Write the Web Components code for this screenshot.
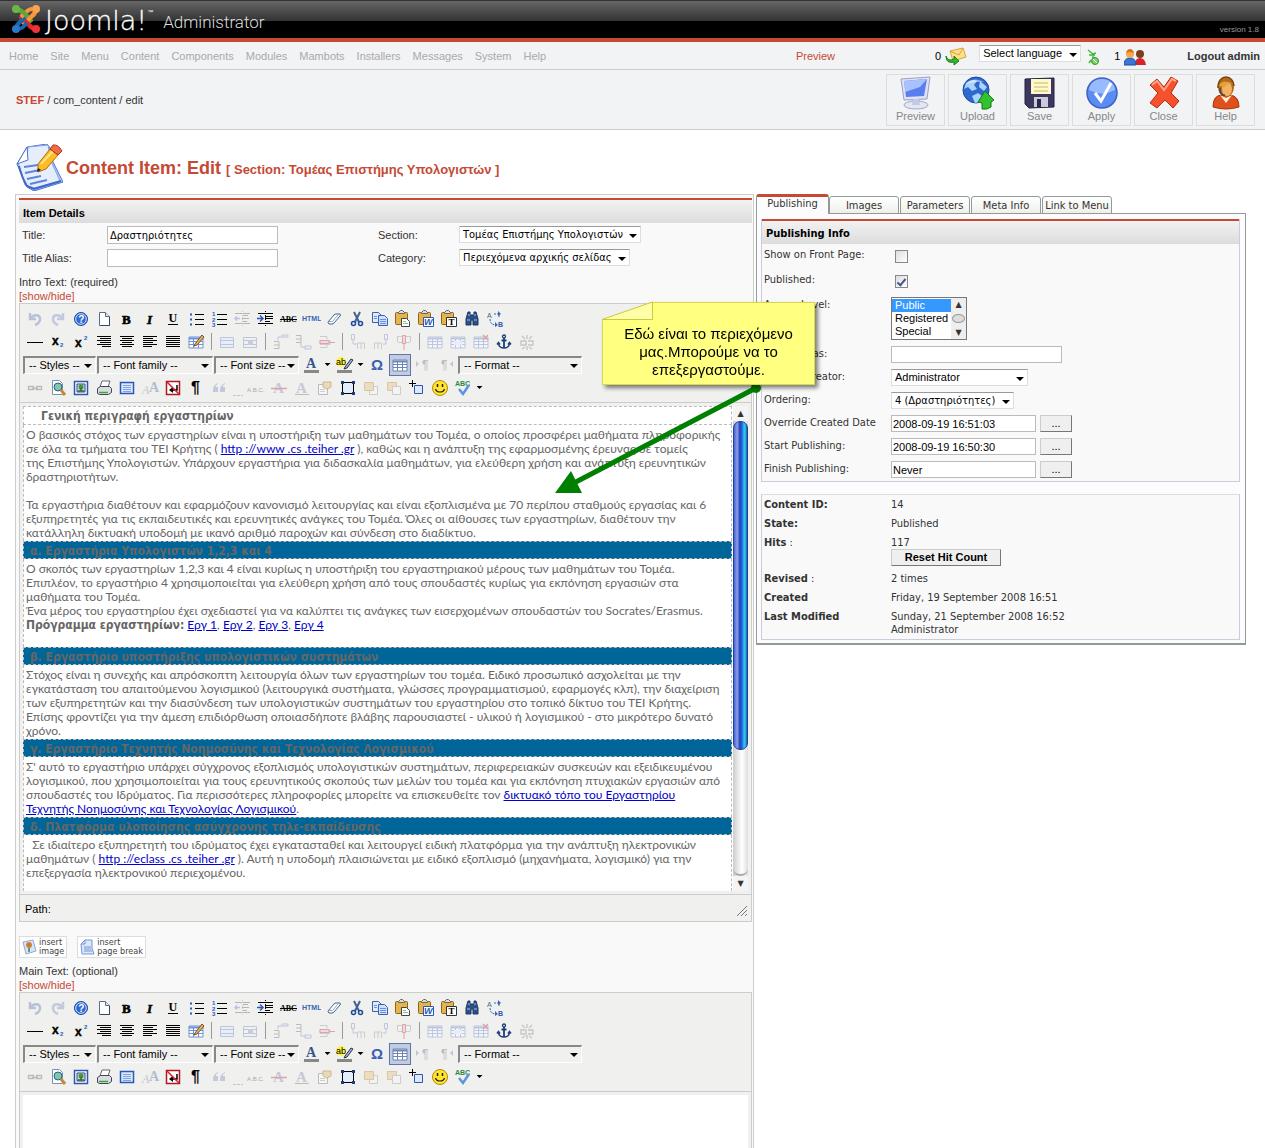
<!DOCTYPE html>
<html lang="el">
<head>
<meta charset="utf-8">
<title>STEF - Administration</title>
<style>
  html { height: 100%; }
  body {
    --accent: #c64934;
    --bar: #f1f3f5;
    --line: #ccc;
    --sans: "Liberation Sans", Arial, sans-serif;
    --ui: "DejaVu Sans Condensed", "Noto Sans", sans-serif;
    --text: Lato, "Liberation Sans", sans-serif;
    margin: 0;
    min-height: 100%;
    display: flex;
    flex-direction: column;
    font: 11px/14px var(--sans);
    color: #333;
    background: #fff;
  }
</style>
</head>
<body>
<admin-header version="version 1.8">Administrator</admin-header>
<admin-menu></admin-menu>
<admin-toolbar site="STEF" path=" / com_content / edit"></admin-toolbar>
<page-title section="[ Section: Τομέας Επιστήμης Υπολογιστών ]">Content Item: Edit</page-title>
<edit-layout>
  <item-details slot="main"></item-details>
  <tab-pane slot="side">
    <publishing-info></publishing-info>
  </tab-pane>
  <sticky-note slot="note">Εδώ είναι το περιεχόμενο<br>μας.Μπορούμε να το<br>επεξεργαστούμε.</sticky-note>
</edit-layout>

<script>
// small editor icons, drawn on a 20x20 grid
const page = (x, y, fill) =>
  `<path d="M${x} ${y}h6l3 3v7h-9z" fill="${fill}" stroke="#3a62a8"/>`;
const lines = (list, color = "#000") =>
  `<path d="${list.map(([x, y, w]) => `M${x} ${y}h${w}`).join("")}" stroke="${color}" stroke-width="1"/>`;
const grid = (color, fill = "#fff") =>
  `<path d="M3 5h14v11H3z" fill="${fill}" stroke="${color}"/><path d="M3 6.500h14" stroke="${color}" stroke-width="2"/><path d="M7.500 6v10M12.500 6v10M3 9.500h14M3 12.500h14" stroke="${color}"/>`;
const clipboard =
  `<rect x="2.500" y="3.500" width="12" height="12" rx="1" fill="#e5b54c" stroke="#8a651c"/><path d="M5.500 4.500v-1l2-2h2l2 2v1z" fill="#ddd" stroke="#666"/>`;
const glyph = (text, x, y, size, color, extra = "") =>
  `<text x="${x}" y="${y}" font-size="${size}" fill="${color}" ${extra}>${text}</text>`;

const ICONS = {
  undo: `<path d="M5 4v6h6M5.500 9.500C8 5 15 5 15 10c0 3-2 5-5 6" stroke="#b9c1da" stroke-width="2.500"/>`,
  redo: `<path d="M15 4v6H9M14.500 9.500C12 5 5 5 5 10c0 3 2 5 5 6" stroke="#c3c9dc" stroke-width="2.500"/>`,
  help: `<circle cx="10" cy="10" r="6.500" fill="#2f69d0" stroke="#1c4aa5"/><circle cx="10" cy="10" r="5.300" stroke="#cfe0ff"/>${glyph("?", 7.3, 13.5, 10, "#fff", 'font-weight="bold"')}`,
  newdoc: `<path d="M5.500 3.500h6l4 4v9h-10z" fill="#fff" stroke="#5a6c8d"/><path d="M11.500 3.500v4h4" stroke="#5a6c8d" fill="#dce6f7"/><path d="M15.500 8v8.500h-9" stroke="#30466b"/>`,
  bold: glyph("B", 5, 14.5, 13, "#000", 'font-family="Liberation Serif" font-weight="bold" stroke="#000" stroke-width=".6"'),
  italic: glyph("I", 7, 14.5, 13, "#000", 'font-family="Liberation Serif" font-weight="bold" font-style="italic" stroke="#000" stroke-width=".5"'),
  underline: `${glyph("U", 5.5, 13, 12, "#000", 'font-family="Liberation Serif" font-weight="bold"')}<path d="M5 15.500h10" stroke="#000"/>`,
  bullist: `<path d="M4 5.500h2M4 10.500h2M4 15.500h2" stroke="#2a58b5" stroke-width="2"/>${lines([[9, 5.5, 9], [9, 10.5, 9], [9, 15.5, 9]])}`,
  numlist: `${glyph("1", 3, 7, 6, "#2a58b5", 'font-weight="bold"')}${glyph("2", 3, 12.5, 6, "#2a58b5", 'font-weight="bold"')}${glyph("3", 3, 18, 6, "#2a58b5", 'font-weight="bold"')}${lines([[8, 5.5, 10], [8, 10.5, 10], [8, 15.5, 10]])}`,
  outdent: `${lines([[3, 4.5, 15], [10, 6.5, 6], [10, 9.5, 7], [10, 12.5, 5], [3, 14.5, 15]], "#b5b5b5")}<path d="M8 9.500H3m2-2l-2 2 2 2" stroke="#b9c4e2" stroke-width="1.500"/><path d="M10.500 2v16" stroke="#ccc" stroke-dasharray="1 1"/>`,
  indent: `${lines([[3, 4.5, 15], [10, 7.5, 8], [10, 9.5, 8], [10, 12.500, 5], [3, 14.5, 15]])}<path d="M2 9.500h6m-3-3l3 3-3 3" stroke="#2a58b5" stroke-width="1.500"/><path d="M10.500 2v16" stroke="#000" stroke-dasharray="1 1"/>`,
  strike: `${glyph("ABC", 2, 13, 8, "#000", 'font-weight="bold" font-family="Liberation Serif"')}<path d="M2 10.500h17" stroke="#000"/>`,
  html: glyph("HTML", 1, 12, 7, "#3566b8", 'font-weight="bold"'),
  eraser: `<path d="M4 13l6-7q1-1 2-1h4q1 1 0 2l-6 7q-1 1-2 1H5q-1-1-1-2z" fill="#fff" stroke="#44618f"/><path d="M4.500 12.500h4l6-7" stroke="#8aa3cc"/>`,
  cut: `<path d="M7 3l5 10M13 3L8 13" stroke="#44618f" stroke-width="2"/><circle cx="6.500" cy="14.500" r="2" stroke="#1d4aa0" stroke-width="1.500"/><circle cx="13.500" cy="14.500" r="2" stroke="#1d4aa0" stroke-width="1.500"/>`,
  copy: `${page(2.5, 3.5, "#dfeaff")}${page(8.500, 6.5, "#cfe0ff")}<path d="M10 10.500h6M10 12.500h6M10 14.500h6M4 7.500h3M4 9.500h3" stroke="#6a92dc"/>`,
  paste: `${clipboard}<path d="M8.500 9.500h5l3 3v5h-8z" fill="#fff" stroke="#444"/><path d="M10 12.500h3M10 14.500h5" stroke="#8ba"/>`,
  pasteword: `${clipboard}<path d="M7.500 8.500h10v9h-10z" fill="#fff" stroke="#2a58b5"/>${glyph("W", 8, 16, 9, "#2a58b5", 'font-weight="bold" font-style="italic"')}`,
  pastetext: `${clipboard}<path d="M7.500 8.500h10v9h-10z" fill="#fff" stroke="#333"/>${glyph("T", 9.5, 16, 9, "#000", 'font-weight="bold" font-family="Liberation Serif"')}`,
  search: `<path d="M6 3h2v3h4V3h2l2 7v6h-5v-5H9v5H4v-6z" fill="#2c4f86" stroke="#1c3868"/><path d="M5 11h3M12 11h3M6 6h2M12 6h2" stroke="#a9c4ef"/>`,
  replace: `${glyph("A", 2, 9, 7, "#44618f")}${glyph("B", 13, 18, 7, "#2a58b5", 'font-weight="bold"')}<path d="M5 10c0 4 2 6 6 6M9 5h5v3" stroke="#3566b8" stroke-dasharray="2 1"/><path d="M13 2l3 3-3 2M10 13l3 3-3 2z" fill="#3566b8"/>`,
  hr: `<path d="M2 10.500h16" stroke="#000"/>`,
  sub: `${glyph("x", 4, 12.5, 12, "#000", 'font-weight="bold" stroke="#000" stroke-width=".4"')}${glyph("2", 12, 15, 6, "#2a58b5", 'font-weight="bold"')}`,
  sup: `${glyph("x", 4, 14.5, 12, "#000", 'font-weight="bold" stroke="#000" stroke-width=".4"')}${glyph("2", 13, 8, 6, "#2a58b5", 'font-weight="bold"')}`,
  right: lines([[3, 4.5, 14], [6, 6.5, 11], [3, 8.5, 14], [6, 10.5, 11], [3, 12.5, 14], [8, 14.5, 9]]),
  center: lines([[3, 4.5, 14], [5, 6.5, 10], [3, 8.5, 14], [5, 10.5, 10], [3, 12.5, 14], [5, 14.5, 10]]),
  left: lines([[3, 4.5, 14], [3, 6.5, 10], [3, 8.5, 14], [3, 10.5, 10], [3, 12.5, 14], [3, 14.5, 9]]),
  full: lines([[3, 4.5, 14], [3, 6.5, 14], [3, 8.5, 14], [3, 10.5, 14], [3, 12.5, 14], [3, 14.5, 14]]),
  table: `${grid("#6d93d6")}<path d="M9 12l7-9 2 2-7 8-3 1z" fill="#e3b467" stroke="#7a5320"/>`,
  rowprops: `<path d="M3.500 5.500h13v10h-13zM3.500 8.500h13v4h-13z" fill="#e9edf5" stroke="#bcc6dc"/>`,
  cellprops: `<path d="M3.500 5.500h13v10h-13zM3.500 8.500h13M3.500 12.500h13M8.500 8v5M11.500 8v5" stroke="#bcc6dc"/><path d="M8 8h5v5H8z" fill="#c6cddd"/>`,
  rowbefore: `<path d="M3 9.500h5v7H3m0-3.500h5" stroke="#bbb"/><path d="M7 8V5h4m0 0h6v-2h-6z" stroke="#bcc6dc"/>`,
  rowafter: `<path d="M2 3.500h5v7H2m0-3.500h5" stroke="#bbb"/><path d="M7 11v4h4m0-1h6v3h-6z" stroke="#bcc6dc"/>`,
  rowdelete: `<path d="M3 4.500h7v3M3 15.500h7v-3M3 8.500h10v4H3z" stroke="#ccc"/><path d="M3 8.500h9v3H3z" stroke="#dfa3ab" fill="#f1d8dc"/><path d="M12 10.500h6" stroke="#dfa3ab"/>`,
  colbefore: `<path d="M3.500 2.500h3v5h-3zM5 8v4h4" stroke="#bcc6dc"/><path d="M9.500 17v-6h7v6M13 11v6" stroke="#ccc"/>`,
  colafter: `<path d="M13.500 2.500h3v5h-3zM15 8v4h-3" stroke="#bcc6dc"/><path d="M3.500 17v-6h7v6M7 11v6" stroke="#ccc"/>`,
  coldelete: `<path d="M3.500 4v6M16.500 4v6M3.500 4.500h4M12 4.500h4M4 10.500h12" stroke="#ccc"/><path d="M8.500 3.500h3v8h-3zM10 12v6" stroke="#dfa3ab" fill="#f1d8dc"/>`,
  split: grid("#bcc6dc", "#f3f5fa"),
  merge: `${grid("#bcc6dc", "#f3f5fa")}<path d="M6 9h8v4H6z" fill="#e6eefc"/>`,
  tabledelete: `${grid("#bcc6dc", "#f3f5fa")}<path d="M12 3l5 5M17 3l-5 5" stroke="#dfa3ab" stroke-width="1.500"/>`,
  anchor: `<circle cx="10" cy="4.500" r="1.500" stroke="#1f3f7a" stroke-width="1.300"/><path d="M10 6v10M7.500 8.500h5" stroke="#1f3f7a" stroke-width="1.800"/><path d="M4.500 11c0 3.500 3 5 5.500 5s5.500-1.500 5.500-5M3 12.500l1.500-2 1.500 2M14 12.500l1.500-2 1.500 2" stroke="#1f3f7a" stroke-width="1.500"/>`,
  unlink: `<path d="M4 9h5v4H4zM11 9h5v4h-5M10 3v4M5 4l3 3M15 4l-3 3M10 14v4M5 17l3-2M15 17l-3-2" stroke="#c5c5c5" stroke-width="1.300"/>`,
  forecolor: `${glyph("A", 5, 13, 14, "#34558f", 'font-weight="bold" font-family="Liberation Serif"')}<path d="M3 15h15v3H3z" fill="#888"/>`,
  backcolor: `<circle cx="7" cy="7" r="5" fill="#fff44a"/>${glyph("ab", 2, 10, 9, "#000")}<path d="M11 12l6-8 2 1-6 8-3 1z" fill="#9bb6e4" stroke="#333"/><path d="M3 15h15v3H3z" fill="#888"/>`,
  omega: glyph("Ω", 4, 15, 15, "#3a62b4", 'font-weight="bold"'),
  visualaid: grid("#6d87b6"),
  ltr: `<path d="M3 6l3 3-3 3z" fill="#bcc6dc"/>${glyph("¶", 9, 14, 12, "#bbb")}`,
  rtl: `<path d="M17 6l-3 3 3 3z" fill="#bcc6dc"/>${glyph("¶", 5, 14, 12, "#bbb")}`,
  link: `<path d="M3.500 8.500h5v3h-5zM11.500 8.500h5v3h-5zM7 10.500h6" stroke="#bbb" stroke-width="1.300"/>`,
  preview: `<path d="M4.500 2.500h7l3 3v11h-10z" fill="#fff" stroke="#7a92b8"/><circle cx="10" cy="9" r="4" fill="#7fc7a7" stroke="#2c5f8f"/><path d="M13 12l4 5" stroke="#c48a3a" stroke-width="3"/>`,
  image: `<path d="M3.500 3.500h13v13h-13z" fill="#fff" stroke="#2a58b5" stroke-width="1.500"/><path d="M6 6h8v8H6z" fill="#b9d9f6" stroke="#446"/><circle cx="10" cy="9" r="2.500" fill="#3b9a3b"/><path d="M10 10v3M7 13h6" stroke="#3a6a2a" stroke-width="1.500"/>`,
  print: `<path d="M8 3h8l-2 6H6z" fill="#fff" stroke="#667"/><path d="M3.500 10.500l3-2h9l2 2v4l-3 2h-9l-2-1z" fill="#d8dde4" stroke="#445"/><path d="M5 14.500h9" stroke="#3da43d" stroke-width="1.500"/>`,
  fullscreen: `<path d="M3.500 4.500h13v11h-13z" fill="#dbe8ff" stroke="#2a58b5" stroke-width="1.500"/><path d="M6 7.500h8M6 9.500h8M6 11.500h8M6 13.500h8" stroke="#7fa2e4"/>`,
  styleprops: `${glyph("A", 2, 16, 12, "#c3c9d6", 'font-style="italic" font-family="Liberation Serif"')}${glyph("A", 9, 14, 14, "#b4bccd", 'font-weight="bold" font-family="Liberation Serif"')}`,
  nonbreaking: `<path d="M3.500 3.500h13v13h-13z" fill="#fff" stroke="#b01822" stroke-width="1.500"/><path d="M14 7v5H9" stroke="#000" stroke-width="1.500"/><path d="M6 12l4-3v6z" fill="#000"/><path d="M4 4l12 12" stroke="#d5202c" stroke-width="1.500"/>`,
  pilcrow: glyph("¶", 5, 15, 16, "#000", 'font-weight="bold"'),
  cite: `<path d="M9 5q-5 2-5 7v2h5v-5H6.500q0-2 2.500-3zM16 5q-5 2-5 7v2h5v-5h-2.500q0-2 2.500-3z" fill="#c3c9dc"/>`,
  acronym: `<path d="M2 17.500h10" stroke="#c5c5c5" stroke-dasharray="3 1"/>`,
  abbr: glyph("A.B.C.", 1, 14, 6, "#aaa"),
  del: `${glyph("A", 4, 15, 15, "#c3c9d6", 'font-weight="bold" font-family="Liberation Serif"')}<path d="M2 10.500h16" stroke="#e0a4a8" stroke-width="1.500"/>`,
  ins: `${glyph("A", 4, 15, 15, "#c3c9d6", 'font-weight="bold" font-family="Liberation Serif"')}<path d="M3 16.500h14" stroke="#bbb"/>`,
  attribs: `<path d="M3.500 6.500h9v10h-9z" fill="#f6f6f6" stroke="#bbb"/><path d="M8 4h8v5l-4 2-4-2z" fill="#e9d9b8" stroke="#cdb98e"/><path d="M5 11.500h5M5 13.500h5" stroke="#ccc"/>`,
  layer: `<path d="M4.500 4.500h11v11h-11z" fill="#e3eefd" stroke="#000"/><path d="M3 3h3v3H3zM14 3h3v3h-3zM3 14h3v3H3zM14 14h3v3h-3z" fill="#1f3f7a"/>`,
  forward: `<path d="M8.500 8.500h8v8h-8z" fill="#f3f3f3" stroke="#ccc"/><path d="M3.500 4.500h9v8h-9z" fill="#ecdcc0" stroke="#d8c7a4"/>`,
  backward: `<path d="M3.500 4.500h9v8h-9z" fill="#ecdcc0" stroke="#d8c7a4"/><path d="M8.500 8.500h8v8h-8z" fill="#f3f3f3" stroke="#ccc"/>`,
  absolute: `<path d="M7.500 7.500h8v8h-8z" fill="#dbe8ff" stroke="#2a58b5"/><path d="M2 5.500h7M5.500 2v7" stroke="#000"/>`,
  smile: `<circle cx="10" cy="10" r="7.500" fill="#ffe52e" stroke="#b58a00"/><path d="M7.500 6v3M12.500 6v3" stroke="#222" stroke-width="1.500"/><path d="M5.500 11c1 4 8 4 9 0" stroke="#222" stroke-width="1.200"/>`,
  spell: `${glyph("ABC", 2, 8, 7, "#2a8a4a", 'font-weight="bold"')}<path d="M6 11l4 5 6-9" stroke="#5b93e0" stroke-width="2.500"/>`,
};

// colour icons of the admin chrome, drawn on a 34x34 grid
const PICTURES = {
  Preview: `<path d="M2 3l29-2-3 22-23 1z" fill="#dfe2f3" stroke="#9ba0c4"/><path d="M5 5l23-2-3 17-18 1z" fill="#5a7df0"/><path d="M5 5l23-2-7 8-15 5z" fill="#a9c1ff"/><path d="M13 24h8l1 5h-10z" fill="#c4c8e2"/><ellipse cx="17" cy="29" rx="12" ry="4" fill="#e4e6f2" stroke="#a5a9c8"/><path d="M14 23h6l1 6h-8z" fill="#c4c8e2"/>`,
  Upload: `<circle cx="15" cy="14" r="13" fill="#2f68cf" stroke="#1f4aa0"/><path d="M5 7q6-5 11-2l-3 4 3 4-5 2-4-4-4 2zM19 5l7 6-3 4-5-4zM11 20l6-3 4 3-3 6-4 1z" fill="#a9d4ff"/><path d="M5 8q8-8 18-2-9-1-18 2z" fill="#fff" opacity=".5"/><path d="M24 15l9 9-3 2v5q-4 3-9 2v-6l-4-1z" fill="#35c02f" stroke="#117a16"/>`,
  Save: `<path d="M2 3l29-1v29l-25 1-4-4z" fill="#3d3760" stroke="#25203f"/><path d="M8 3h20v15H8z" fill="#fdf9cf"/><path d="M11 7h14M11 11h14M11 15h14" stroke="#c9b95b"/><path d="M11 21h14v10H11z" fill="#c9cadb"/><path d="M14 23h4v8h-4z" fill="#2b2747"/>`,
  Apply: `<circle cx="17" cy="17" r="15" fill="#5b8cf2" stroke="#3e62c4" stroke-width="1.500"/><path d="M4 14a13 11 0 0 1 26 0q-13 7-26 0z" fill="#98baff"/><path d="M10 17l6 8L26 7" stroke="#fff" stroke-width="3"/>`,
  Close: `<path d="M3 9l7-6 7 8 7-10 7 4-7 12 8 8-6 7-8-8-8 8-7-5 8-10z" fill="#f4512c" stroke="#b52c10"/><path d="M5 9l5-4 7 9 8-11 4 2" stroke="#ffa389" stroke-width="2"/>`,
  Help: `<path d="M4 31q0-12 9-12h8q9 1 9 12-13 4-26 0z" fill="#e0501d" stroke="#a23408"/><path d="M11 19l6 8 6-8-6 3z" fill="#fff0d8"/><ellipse cx="17" cy="11" rx="8" ry="10" fill="#b46a1b"/><ellipse cx="18" cy="13" rx="5" ry="7" fill="#f2b163"/><path d="M10 10q3-8 14-2-6-1-8 3z" fill="#e5a338"/><path d="M9 12v-2a8 9 0 0 1 16 0" stroke="#7a430a" stroke-width="1.500"/><path d="M11 12v4q2 4 5 3" stroke="#444" stroke-width="1.500"/>`,
};

const svg = (body, w, h, box = `0 0 ${w} ${h}`) =>
  `<svg width="${w}" height="${h}" viewBox="${box}" fill="none" aria-hidden="true">${body}</svg>`;

class AdminHeader extends HTMLElement {
  connectedCallback() {
    this.attachShadow({ mode: "open" }).innerHTML = /*html*/ `
      <style>
        :host {
          display: flex; align-items: center; height: 38px; padding: 0 6px 0 11px;
          border-bottom: 4px solid var(--accent);
          background: linear-gradient(#333 1px, #666 1px, #333 21px, #000 21px);
          color: #fff;
        }
        svg { margin-right: 4px; }
        .name { margin-top: 3px; font: 200 27px/30px "DejaVu Sans", sans-serif; -webkit-text-stroke: 0.3px #fff; }
        sup { font: 6px/6px var(--sans); align-self: flex-start; margin-top: 9px; }
        .sub { font: 300 17px/20px Roboto, sans-serif; margin: 5px 0 0 10px; color: #ddd; }
        .version { margin: 22px 0 0 auto; font: 8px/10px var(--sans); color: #999; }
      </style>
      ${svg(`
        <path d="M5 5q5 1 7 4l9 9" stroke="#5aa63b" stroke-width="4.500"/>
        <path d="M25 5q-1 5-4 7l-9 9" stroke="#f79838" stroke-width="4.500"/>
        <path d="M25 25q-5-1-7-4l-9-9" stroke="#e2292c" stroke-width="4.500"/>
        <path d="M5 25q1-5 4-7l5-5" stroke="#1d63ae" stroke-width="4.500"/>
        <path d="M10 13l4-4q4-4 7-4" stroke="#f79838" stroke-width="4"/>
        <path d="M8 6q4 1 7 5l2 2" stroke="#5aa63b" stroke-width="4"/>
        <path d="M8 25q4-1 6-4l2-2" stroke="#1d63ae" stroke-width="4"/>
        <circle cx="5" cy="5" r="4" fill="#6cb548"/><circle cx="25" cy="5" r="4" fill="#f9a44f"/>
        <circle cx="25" cy="25" r="4" fill="#ee3338"/><circle cx="5" cy="25" r="4" fill="#2a78c8"/>`, 30, 30)}
      <span class="name">Joomla!</span><sup>™</sup>
      <span class="sub"><slot></slot></span>
      <span class="version">${this.getAttribute("version")}</span>
    `;
  }
}

// Puts the arrow over a slotted <select>
class DropDown extends HTMLElement {
  connectedCallback() {
    this.attachShadow({ mode: "open" }).innerHTML = /*html*/ `
      <style>
        :host { display: inline-grid; align-items: center; vertical-align: top; }
        ::slotted(select), i { grid-area: 1 / 1; }
        ::slotted(select) {
          appearance: none; box-sizing: border-box; width: 100%; height: 17px; margin: 0;
          padding: 0 17px 0 3px; border: 1px solid #ddd; border-top-color: #999; border-radius: 0;
          background: #fff; color: #000; font: 11px/15px var(--sans);
        }
        :host([inset]) ::slotted(select) {
          height: 18px; padding: 0 4px; border: 2px solid #888; border-right: 1px solid #fff;
          border-bottom: 1px solid #fff; background: #f0f0ee;
        }
        i {
          justify-self: end; width: 8px; height: 4px; margin: 3px 4px 0 0; background: #000;
          clip-path: polygon(0 0, 100% 0, 50% 100%); pointer-events: none; z-index: 1;
        }
      </style>
      <slot></slot><i></i>
    `;
  }
}

class AdminMenu extends HTMLElement {
  connectedCallback() {
    const items = ["Home", "Site", "Menu", "Content", "Components", "Modules", "Mambots", "Installers", "Messages", "System", "Help"];
    this.attachShadow({ mode: "open" }).innerHTML = /*html*/ `
      <style>
        :host {
          display: flex; align-items: center; height: 27px; padding: 0 5px 0 9px;
          background: var(--bar); border-bottom: 1px solid var(--line);
        }
        nav { display: flex; gap: 12px; flex: 1; }
        a { text-decoration: none; color: #aaa; }
        a.site { color: var(--accent); }
        .status { display: flex; align-items: center; margin-left: 100px; color: #000; }
        .status svg { margin: 2px 0 0 4px; }
        drop-down { width: 102px; margin: 0 6px 4px 12px; }
        svg.lang { margin: 2px 15px 0 0; }
        .logout { font-weight: bold; color: #333; margin-left: 41px; }
      </style>
      <nav>${items.map((item) => `<a href="#">${item}</a>`).join("")}</nav>
      <a class="site" href="#">Preview</a>
      <div class="status">
        <span>0</span>
        ${svg(`<path d="M5 4l13-3 3 9-13 4z" fill="#fde08a" stroke="#d9a53a"/><path d="M5 4l9 4 4-7" stroke="#d9a53a"/><path d="M1 9q2 6 8 3V9l5 5-5 4v-3Q1 17 1 9z" fill="#38b52c" stroke="#1a8014"/>`, 22, 19)}
        <drop-down><select aria-label="Language"><option>Select language</option></select></drop-down>
        <svg class="lang" width="12" height="18" fill="none" aria-hidden="true"><path d="M1 2l5 4v5M2 7h6M4 12l-2 3M6 6l3-1" stroke="#48b83a" stroke-width="1.500"/><circle cx="8" cy="13" r="3.500" fill="#7fd06f" stroke="#2f9a2a"/><path d="M6 11l4 4" stroke="#fff"/></svg>
        <span>1</span>
        ${svg(`<path d="M11 17q0-7 5-7t6 7z" fill="#d8232a"/><circle cx="16" cy="6" r="4" fill="#7b3f1c"/><path d="M0 17q0-7 6-7t6 7z" fill="#3a75d8" stroke="#1f4fa5"/><circle cx="6" cy="6" r="4" fill="#f4a94b"/><path d="M2 5q1-4 4-4t4 4q-4-2-8 0z" fill="#d9711a"/>`, 22, 18)}
        <a class="logout" href="#">Logout admin</a>
      </div>
    `;
  }
}

class AdminToolbar extends HTMLElement {
  connectedCallback() {
    this.attachShadow({ mode: "open" }).innerHTML = /*html*/ `
      <style>
        :host {
          display: flex; align-items: center; justify-content: space-between;
          padding: 4px 10px 3px 16px; background: var(--bar); border-bottom: 1px solid var(--line);
        }
        b { color: var(--accent); }
        .buttons { display: flex; gap: 3px; }
        button {
          display: flex; flex-direction: column; align-items: center; box-sizing: border-box;
          width: 59px; height: 52px; padding: 1px 0 0; border: 1px solid #ddd;
          background: none; color: #888; font: 11px/12px var(--sans);
        }
      </style>
      <span><b>${this.getAttribute("site")}</b>${this.getAttribute("path")}</span>
      <div class="buttons">
        ${Object.keys(PICTURES).map((name) => `<button type="button">${svg(PICTURES[name], 34, 34)}${name}</button>`).join("")}
      </div>
    `;
  }
}

class PageTitle extends HTMLElement {
  connectedCallback() {
    this.attachShadow({ mode: "open" }).innerHTML = /*html*/ `
      <style>
        :host { display: flex; align-items: center; padding: 14px 16px 3px; color: var(--accent); }
        h1 { margin: 2px 0 0 3px; font: bold 18px/24px var(--sans); }
        small { font-size: 13px; }
      </style>
      ${svg(`
        <path d="M11 3l20-3 3 4 3 14 10 20-29 9-7-4L1 20z" fill="#b9cef6" stroke="#4a74d0"/>
        <path d="M2 19l9-3 1-13 20-2 3 16 9 20-26 7-9-3z" fill="#e6eefd" stroke="#7d9fe6"/>
        <path d="M1 20l10-17 1 13z" fill="#fff" stroke="#4a74d0"/>
        <path d="M3 22q3 12 8 20l7 3 27-8" stroke="#3f68c8" stroke-width="2"/>
        <path d="M8 23l14-2M9 29l15-3M11 35l14-3M14 40l17-4" stroke="#5d84d8" stroke-width="2"/>
        <path d="M22 20L34 5l8 6-12 14-8 3z" fill="#fdbb25" stroke="#b06f0a"/>
        <path d="M25 20L37 7" stroke="#ffe487" stroke-width="2"/>
        <path d="M34 5l3-4q5-1 9 6l-4 4z" fill="#f06a48" stroke="#b03414"/>
        <path d="M22 24l-1 4 4-2z" fill="#222"/>`, 47, 47)}
      <h1><slot></slot> <small>${this.getAttribute("section")}</small></h1>
    `;
  }
}

class EditLayout extends HTMLElement {
  connectedCallback() {
    this.attachShadow({ mode: "open" }).innerHTML = /*html*/ `
      <style>
        :host {
          position: relative; flex: 1; display: grid; grid-template-columns: 739fr 490fr;
          column-gap: 2px; padding: 0 19px 0 15px;
        }
        ::slotted([slot="side"]) { align-self: start; }
      </style>
      <slot name="main"></slot><slot name="side"></slot><slot name="note"></slot>
    `;
  }
}

class SectionHead extends HTMLElement {
  connectedCallback() {
    this.attachShadow({ mode: "open" }).innerHTML = /*html*/ `
      <style>
        :host {
          display: block; padding: 6px 4px 3px; border-top: 2px solid var(--accent); line-height: 14px;
          background: linear-gradient(#f2f2f2, #dcdcdc); color: #000; font-weight: bold;
        }
      </style>
      <slot></slot>
    `;
  }
}

class ItemDetails extends HTMLElement {
  connectedCallback() {
    this.attachShadow({ mode: "open" }).innerHTML = /*html*/ `
      <style>
        :host {
          display: flex; flex-direction: column; padding: 3px 1px 0 3px; min-width: 0;
          border: 1px solid var(--line); border-bottom: 0; background: #f9f9f9;
        }
        .fields {
          display: grid; grid-template-columns: 85px 271px 81px 1fr; grid-auto-rows: 23px;
          padding: 0 3px 6px; align-items: start;
        }
        label { padding-top: 5px; }
        .fields input, drop-down { margin-top: 3px; justify-self: start; }
        input {
          box-sizing: border-box; width: 171px; height: 18px; padding: 0 2px;
          border: 1px solid #bbb; background: #fff; color: #000; font: 11px/16px var(--sans);
        }
        .greek { font-family: var(--ui); }
        a { color: var(--accent); text-decoration: none; align-self: start; }
        .inserts { display: flex; gap: 10px; margin: 14px 0 6px; }
        .inserts button {
          display: flex; align-items: center; gap: 2px; height: 22px; padding: 0 2px; border: 1px solid #ddd;
          background: #fff; color: #444; font: 9px/9px var(--ui); text-align: left;
        }
        rich-editor:last-of-type { flex: 1; }
      </style>
      <section-head>Item Details</section-head>
      <div class="fields">
        <label for="title">Title:</label><input id="title" class="greek" value="Δραστηριότητες">
        <label for="section">Section:</label>
        <drop-down><select id="section" class="greek"><option>Τομέας Επιστήμης Υπολογιστών</option></select></drop-down>
        <label for="alias">Title Alias:</label><input id="alias">
        <label for="category">Category:</label>
        <drop-down><select id="category" class="greek"><option>Περιεχόμενα αρχικής σελίδας</option></select></drop-down>
      </div>
      <span>Intro Text: (required)</span>
      <a href="#">[show/hide]</a>
      <rich-editor status><item-text></item-text></rich-editor>
      <div class="inserts">
        <button type="button">${svg(`<path d="M1 3l10-2 3 11-10 3z" fill="#d5e4fb" stroke="#8fa9d6"/><circle cx="7" cy="6" r="3" fill="#e07a3a"/><circle cx="7" cy="6" r="1" fill="#5a3"/><path d="M7 9v4" stroke="#3a8a3a" stroke-width="1.500"/>`, 15, 16)}<span>insert<br>image</span></button>
        <button type="button">${svg(`<path d="M1 5l4-4h7v8l2 6H2z" fill="#dbe7fc" stroke="#7495d6"/><path d="M1 5h4V1M4 8h7M4 10h7M4 12h8" stroke="#7495d6"/>`, 15, 16)}<span>insert<br>page break</span></button>
      </div>
      <span>Main Text: (optional)</span>
      <a href="#">[show/hide]</a>
      <rich-editor></rich-editor>
    `;
  }
}

class RichEditor extends HTMLElement {
  static rows = [
    "undo redo help newdoc bold italic underline bullist numlist outdent indent strike html eraser cut copy paste pasteword pastetext search replace",
    "hr sub sup right center left full table | rowprops cellprops | rowbefore rowafter rowdelete | colbefore colafter coldelete | split merge tabledelete anchor unlink",
    "[-- Styles --:73] [-- Font family --:116] [-- Font size --:85] forecolor > backcolor > omega visualaid ltr rtl [-- Format --:124]",
    "link preview image print fullscreen styleprops nonbreaking pilcrow cite acronym abbr del ins attribs layer forward backward absolute smile spell >",
  ];
  connectedCallback() {
    this.attachShadow({ mode: "open" }).innerHTML = /*html*/ `
      <style>
        :host { display: flex; flex-direction: column; border: 1px solid var(--line); background: #f0f0ee; }
        :host(:not([status])) { border-bottom: 0; }
        :host(:not([status])) .frame { margin-bottom: 0; }
        .tools { padding: 3px; border-bottom: 1px solid var(--line); }
        .row { display: flex; align-items: center; gap: 1px; height: 23px; padding-left: 1px; }
        .row:nth-child(3) { padding-left: 0; }
        button { display: grid; place-items: center; box-sizing: border-box; width: 22px; height: 22px; padding: 0; border: 0; background: none; }
        button.acronym { width: 13px; }
        button.visualaid { border: 1px solid #5b77ad; background: #c2cbe0; }
        .more { width: 9px; }
        .more i { width: 6px; height: 3px; background: #000; clip-path: polygon(0 0, 100% 0, 50% 100%); }
        .bar { width: 1px; height: 17px; margin: 0 3px; background: #999; }
        .frame { display: flex; flex: 1; margin: 3px; min-height: 24px; background: #fff; }
        ::slotted(*) { flex: 1; min-width: 0; }
        .scroll { display: flex; flex-direction: column; width: 15px; margin-left: 1px; background: linear-gradient(90deg, #ccc, #fff 60%, #ddd); }
        .scroll button { width: 15px; height: 15px; background: #f4f4f4; font: 8px/8px "DejaVu Sans", sans-serif; color: #333; }
        .thumb {
          flex: 330; border-radius: 7px; border: 1px solid #1d3f9f; box-sizing: border-box;
          background: linear-gradient(90deg, #4a63cc, #8f9fe8 25%, #2342bb 45%, #1f5be0 60%, #30c8f0 78%, #28b4d8 88%, #1a5a9c);
        }
        .rest { flex: 125; border-radius: 0 0 7px 7px; border-bottom: 2px solid #aaa; }
        .status { display: flex; justify-content: space-between; align-items: end; padding: 6px 3px 4px 5px; border-top: 1px solid var(--line); line-height: 16px; color: #000; }
      </style>
      <div class="tools" role="toolbar">
        ${RichEditor.rows.map((row) => `<div class="row">${this._row(row)}</div>`).join("")}
      </div>
      <div class="frame">
        <slot></slot>
        ${this.hasAttribute("status") ? `
          <div class="scroll">
            <button type="button" aria-label="Scroll up">▲</button>
            <div class="thumb"></div><div class="rest"></div>
            <button type="button" aria-label="Scroll down">▼</button>
          </div>` : ""}
      </div>
      ${this.hasAttribute("status") ? `<div class="status"><span>Path:</span>${svg(`<path d="M1 11L11 1M5 11l6-6M9 11l2-2" stroke="#777"/>`, 12, 12)}</div>` : ""}
    `;
  }
  _row(row) {
    return row.match(/\[[^\]]+\]|\S+/g).map((item) => {
      if (item === "|") return `<span class="bar"></span>`;
      if (item === ">") return `<button type="button" class="more" aria-label="More"><i></i></button>`;
      if (item[0] === "[") {
        const [text, width] = item.slice(1, -1).split(":");
        return `<drop-down inset style="width: ${width}px"><select aria-label="${text}"><option>${text}</option></select></drop-down>`;
      }
      const width = item === "acronym" ? 13 : 20;
      return `<button type="button" class="${item}" aria-label="${item}">${svg(ICONS[item], width, 20)}</button>`;
    }).join("");
  }
}

class ItemText extends HTMLElement {
  connectedCallback() {
    this.attachShadow({ mode: "open" }).innerHTML = /*html*/ `
      <style>
        :host { display: block; height: 485px; overflow: hidden; font: 12px/14px var(--text); color: #666; }
        table { width: 100%; height: 100%; border-spacing: 0; }
        th, td { border: 1px dashed #bbb; border-width: 0 1px; padding: 3px 0 1px 2px; text-align: left; vertical-align: top; white-space: nowrap; }
        th { border-width: 1px; padding: 2px 0 0 6px; height: 14px; background: #069; }
        th, b { font-family: var(--ui); }
        thead th { padding: 2px 0 1px 17px; background: none; }
        tr:last-child td { height: 100%; }
        a { color: #00c; }
      </style>
      <table>
        <thead><tr><th>Γενική περιγραφή εργαστηρίων</th></tr></thead>
        <tbody>
        <tr><td>Ο βασικός στόχος των εργαστηρίων είναι η υποστήριξη των μαθημάτων του Τομέα, ο οποίος προσφέρει μαθήματα πληροφορικής<br>
          σε όλα τα τμήματα του ΤΕΙ Κρήτης ( <a href="#">http ://www .cs .teiher .gr</a> ), καθώς και η ανάπτυξη της εφαρμοσμένης έρευνας σε τομείς<br>
          της Επιστήμης Υπολογιστών. Υπάρχουν εργαστήρια για διδασκαλία μαθημάτων, για ελεύθερη χρήση και ανάπτυξη ερευνητικών<br>
          δραστηριοτήτων.<br><br>
          Τα εργαστήρια διαθέτουν και εφαρμόζουν κανονισμό λειτουργίας και είναι εξοπλισμένα με 70 περίπου σταθμούς εργασίας και 6<br>
          εξυπηρετητές για τις εκπαιδευτικές και ερευνητικές ανάγκες του Τομέα. Όλες οι αίθουσες των εργαστηρίων, διαθέτουν την<br>
          κατάλληλη δικτυακή υποδομή με ικανό αριθμό παροχών και σύνδεση στο διαδίκτυο.</td></tr>
        <tr><th>α. Εργαστήρια Υπολογιστών 1,2,3 και 4</th></tr>
        <tr><td>Ο σκοπός των εργαστηρίων 1,2,3 και 4 είναι κυρίως η υποστήριξη του εργαστηριακού μέρους των μαθημάτων του Τομέα.<br>
          Επιπλέον, το εργαστήριο 4 χρησιμοποιείται για ελεύθερη χρήση από τους σπουδαστές κυρίως για εκπόνηση εργασιών στα<br>
          μαθήματα του Τομέα.<br>
          Ένα μέρος του εργαστηρίου έχει σχεδιαστεί για να καλύπτει τις ανάγκες των εισερχομένων σπουδαστών του Socrates/Erasmus.<br>
          <b>Πρόγραμμα εργαστηρίων:</b> <a href="#">Εργ 1</a>, <a href="#">Εργ 2</a>, <a href="#">Εργ 3</a>, <a href="#">Εργ 4</a><br>&nbsp;</td></tr>
        <tr><th>β. Εργαστήριο υποστήριξης υπολογιστικών συστημάτων</th></tr>
        <tr><td>Στόχος είναι η συνεχής και απρόσκοπτη λειτουργία όλων των εργαστηρίων του τομέα. Ειδικό προσωπικό ασχολείται με την<br>
          εγκατάσταση του απαιτούμενου λογισμικού (λειτουργικά συστήματα, γλώσσες προγραμματισμού, εφαρμογές κλπ), την διαχείριση<br>
          των εξυπηρετητών και την διασύνδεση των υπολογιστικών συστημάτων του εργαστηρίου στο τοπικό δίκτυο του ΤΕΙ Κρήτης.<br>
          Επίσης φροντίζει για την άμεση επιδιόρθωση οποιασδήποτε βλάβης παρουσιαστεί - υλικού ή λογισμικού - στο μικρότερο δυνατό<br>
          χρόνο.</td></tr>
        <tr><th>γ. Εργαστήριο Τεχνητής Νοημοσύνης και Τεχνολογίας Λογισμικού</th></tr>
        <tr><td>Σ' αυτό το εργαστήριο υπάρχει σύγχρονος εξοπλισμός υπολογιστικών συστημάτων, περιφερειακών συσκευών και εξειδικευμένου<br>
          λογισμικού, που χρησιμοποιείται για τους ερευνητικούς σκοπούς των μελών του τομέα και για εκπόνηση πτυχιακών εργασιών από<br>
          σπουδαστές του Ιδρύματος. Για περισσότερες πληροφορίες μπορείτε να επισκευθείτε τον <a href="#">δικτυακό τόπο του Εργαστηρίου<br>
          Τεχνητής Νοημοσύνης και Τεχνολογίας Λογισμικού</a>.</td></tr>
        <tr><th>δ. Πλατφόρμα υλοποίησης ασύγχρονης τηλε-εκπαίδευσης</th></tr>
        <tr><td>&nbsp; Σε ιδιαίτερο εξυπηρετητή του ιδρύματος έχει εγκατασταθεί και λειτουργεί ειδική πλατφόρμα για την ανάπτυξη ηλεκτρονικών<br>
          μαθημάτων ( <a href="#">http ://eclass .cs .teiher .gr</a> ). Αυτή η υποδομή πλαισιώνεται με ειδικό εξοπλισμό (μηχανήματα, λογισμικό) για την<br>
          επεξεργασία ηλεκτρονικού περιεχομένου.</td></tr>
        </tbody>
      </table>
    `;
  }
}

class TabPane extends HTMLElement {
  connectedCallback() {
    const tabs = ["Publishing", "Images", "Parameters", "Meta Info", "Link to Menu"];
    this.attachShadow({ mode: "open" }).innerHTML = /*html*/ `
      <style>
        :host { display: block; font: 11px/13px var(--ui); }
        .tabs { display: flex; align-items: flex-end; gap: 1px; height: 20px; margin-bottom: -1px; }
        button {
          box-sizing: border-box; width: 70px; height: 18px; padding: 0; border: 1px solid #919b9c;
          border-radius: 3px 3px 0 0; background: linear-gradient(#fff, #f0f0ea); color: #333; font: inherit; white-space: nowrap;
        }
        button[aria-selected="true"] {
          width: 73px; height: 20px; margin-right: -1px; padding-bottom: 4px; border-top: 3px solid var(--accent); border-bottom: 0; background: #fcfcfe; position: relative;
        }
        .pane { border: 1px solid #919b9c; border-bottom-width: 2px; padding: 5px 5px 3px 4px; background: #fcfcfe; }
      </style>
      <div class="tabs" role="tablist">
        ${tabs.map((tab, index) => `<button type="button" role="tab" aria-selected="${index === 0}">${tab}</button>`).join("")}
      </div>
      <div class="pane"><slot></slot></div>
    `;
  }
}

class PublishingInfo extends HTMLElement {
  connectedCallback() {
    this.attachShadow({ mode: "open" }).innerHTML = /*html*/ `
      <style>
        :host { display: grid; gap: 12px; }
        section { border: 1px solid #ccd; border-top-color: #ddd; background: #f9f9f9; }
        .head { border-top: 0; }
        .row { display: grid; grid-template-columns: 127px 1fr; align-items: start; padding: 3px 2px 3px; line-height: 13px; }
        .field { box-sizing: border-box; min-height: 23px; padding-bottom: 0; }
        .tick { height: 25px; }
        .list { height: 49px; }
        label { padding-top: 1px; }
        input, select, button { box-sizing: border-box; margin: 0; font: 11px/15px var(--sans); color: #000; }
        input[type="text"] { width: 171px; height: 17px; padding: 0 1px; border: 1px solid #bbb; background: #fff; }
        .date { display: flex; gap: 4px; }
        .date input[type="text"] { width: 145px; }
        button { width: 32px; height: 17px; padding: 0; border: 1px solid #ccc; border-right-color: #777; border-bottom-color: #777; background: #efefef; }
        button.reset { width: 110px; font-weight: bold; }
        input[type="checkbox"] {
          appearance: none; display: grid; place-items: center; width: 13px; height: 13px; margin: 3px 0 0 4px;
          border: 1px solid #888; background: linear-gradient(135deg, #ddd, #fff);
        }
        input:checked::after { content: ""; width: 3px; height: 7px; border: solid #44588f; border-width: 0 2px 2px 0; transform: rotate(40deg); }
        .listbox { display: flex; justify-self: start; width: 76px; box-sizing: border-box; height: 43px; border: 1px solid #777; background: #fff; }
        .listbox select { flex: 1; height: 41px; padding: 1px 0 0; border: 0; overflow: hidden; border-radius: 0; background: #fff; scrollbar-width: none; outline: none; }
        option { padding: 0 0 0 3px; min-height: 13px; line-height: 13px; }
        option:checked { background: #3399ff linear-gradient(#3399ff, #3399ff); color: #fff; }
        .bar { display: flex; flex-direction: column; align-items: center; justify-content: space-between; width: 15px; background: #eee; font: 8px/13px "DejaVu Sans", sans-serif; }
        .bar i { width: 11px; height: 7px; border-radius: 50%; border: 1px solid #999; background: #ddd; }
        .admin { width: 137px; }
        .greek { font-family: var(--ui); }
      </style>
      <section class="head">
        <section-head>Publishing Info</section-head>
        <div class="row field tick"><label for="front">Show on Front Page:</label><input type="checkbox" id="front"></div>
        <div class="row field tick"><label for="published">Published:</label><input type="checkbox" id="published" checked></div>
        <div class="row field list"><label for="access">Access Level:</label>
          <div class="listbox">
            <select id="access" size="3"><option selected>Public</option><option>Registered</option><option>Special</option></select>
            <div class="bar"><span>▲</span><i></i><span>▼</span></div>
          </div>
        </div>
        <div class="row field"><label for="author">Author Alias:</label><input type="text" id="author"></div>
        <div class="row field"><label for="creator">Change Creator:</label><drop-down class="admin"><select id="creator"><option>Administrator</option></select></drop-down></div>
        <div class="row field"><label for="ordering">Ordering:</label><span><drop-down><select id="ordering" class="greek"><option>4 (Δραστηριότητες)</option></select></drop-down></span></div>
        ${[["created", "Override Created Date", "2008-09-19 16:51:03"], ["start", "Start Publishing:", "2008-09-19 16:50:30"], ["finish", "Finish Publishing:", "Never"]].map(([id, label, value]) => `
          <div class="row field"><label for="${id}">${label}</label><div class="date"><input type="text" id="${id}" value="${value}"><button type="button">...</button></div></div>`).join("")}
      </section>
      <section>
        <div class="row"><b>Content ID:</b><span>14</span></div>
        <div class="row"><b>State:</b><span>Published</span></div>
        <div class="row"><span><b>Hits</b> :</span><div>117<br><button type="button" class="reset">Reset Hit Count</button></div></div>
        <div class="row"><span><b>Revised</b> :</span><span>2 times</span></div>
        <div class="row"><b>Created</b><span>Friday, 19 September 2008 16:51</span></div>
        <div class="row"><b>Last Modified</b><span>Sunday, 21 September 2008 16:52<br>Administrator</span></div>
      </section>
    `;
  }
}

// Yellow note with an arrow to the text it explains
class StickyNote extends HTMLElement {
  connectedCallback() {
    this.attachShadow({ mode: "open" }).innerHTML = /*html*/ `
      <style>
        :host { position: absolute; left: 602px; top: 108px; width: 213px; z-index: 2; color: #000; }
        .paper {
          box-sizing: border-box; padding: 22px 4px 5px; background: #ffff80;
          border: 1px solid #d8d84a; clip-path: polygon(50px 0, 110% 0, 110% 110%, 0 110%, 0 18px);
          font: 15px/18px var(--sans); text-align: center;
        }
        .wrap { position: relative; filter: drop-shadow(3px 3px 2px rgba(0, 0, 0, 0.5)); }
        svg { position: absolute; overflow: visible; }
        .fold { left: 0; top: 0; }
        .arrow { left: -48px; top: 84px; }
      </style>
      <svg class="arrow" width="208" height="108" fill="none" aria-hidden="true">
        <path d="M202 2L18 98" stroke="#008000" stroke-width="5"/>
        <circle cx="202" cy="2" r="5" fill="#008000"/>
        <path d="M1 107l16-22 11 22z" fill="#008000"/>
      </svg>
      <div class="wrap"><div class="paper"><slot></slot></div></div>
      <svg class="fold" width="51" height="19" fill="none" aria-hidden="true"><path d="M50.500 0v17.500H0z" fill="#ffffa8" stroke="#c9c943"/></svg>
    `;
  }
}

window.customElements.define("admin-header", AdminHeader);
window.customElements.define("drop-down", DropDown);
window.customElements.define("admin-menu", AdminMenu);
window.customElements.define("admin-toolbar", AdminToolbar);
window.customElements.define("page-title", PageTitle);
window.customElements.define("edit-layout", EditLayout);
window.customElements.define("section-head", SectionHead);
window.customElements.define("item-details", ItemDetails);
window.customElements.define("rich-editor", RichEditor);
window.customElements.define("item-text", ItemText);
window.customElements.define("tab-pane", TabPane);
window.customElements.define("publishing-info", PublishingInfo);
window.customElements.define("sticky-note", StickyNote);
</script>
</body>
</html>
